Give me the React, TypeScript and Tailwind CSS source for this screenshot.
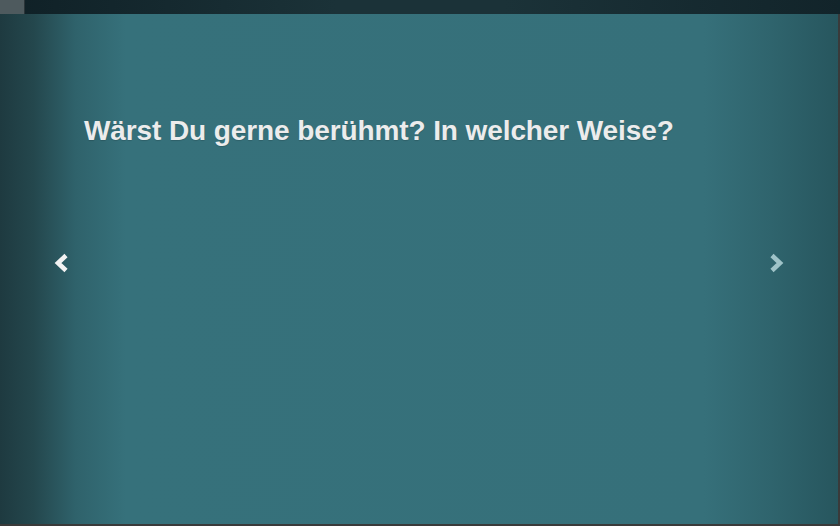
import React from 'react';

const Chevron = ({ dir, className }: { dir: 'left' | 'right'; className?: string }) => (
  <svg width="18" height="22" viewBox="0 0 18 22" className={`block ${className ?? ''}`}>
    {dir === 'left' ? (
      <path d="M13 3.5 L5 11 L13 18.5" fill="none" stroke="currentColor" strokeWidth="4.6" strokeLinejoin="miter" />
    ) : (
      <path d="M5 3.5 L13 11 L5 18.5" fill="none" stroke="currentColor" strokeWidth="4.6" strokeLinejoin="miter" />
    )}
  </svg>
);

const App = () => {
  return (
    <div className="w-[840px] h-[526px] flex flex-col bg-[#3a3a3a] font-['Liberation_Sans',Arial,sans-serif]">
      {/* top strip */}
      <div className="h-[14px] flex shrink-0 bg-[linear-gradient(to_right,#0f2026,#1b3238_40%,#1b3238_60%,#12242a)]">
        <div className="w-[25px] h-full bg-[#4e5a5e] border-r border-[#2a3438]" />
      </div>

      {/* slide */}
      <div className="relative flex-1 mr-[2px] mb-[2px] bg-[linear-gradient(to_right,#1e3a40_0%,#24474d_4%,#2f626b_9%,#36717b_15%,#36707a_84%,#2f646d_92%,#27565e_100%)]">
        <h1 className="pt-[103px] pl-[84px] text-[28px] leading-none font-bold text-[#ececec] tracking-[-0.1px] [text-shadow:0_1px_1px_rgba(0,0,0,0.15)]">
          Wärst Du gerne berühmt? In welcher Weise?
        </h1>

        <button className="absolute left-[53px] top-[238px] text-[#f2f2f2]">
          <Chevron dir="left" />
        </button>
        <button className="absolute left-[767px] top-[238px] text-[#9fc3c8]">
          <Chevron dir="right" />
        </button>
      </div>
    </div>
  );
};

export default App;
